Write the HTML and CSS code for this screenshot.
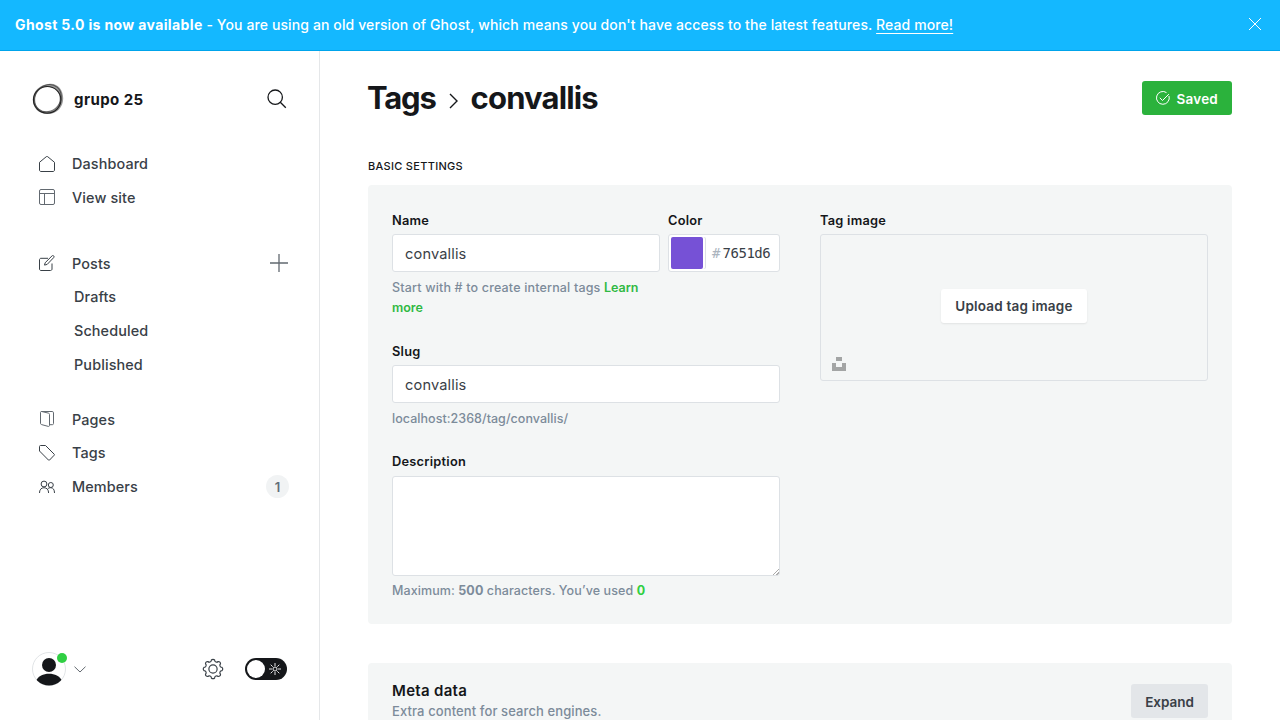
FILE: index.html
```html
<!DOCTYPE html>
<html lang="en">
<head>
<meta charset="utf-8">
<title>Tags - convallis</title>
<link rel="stylesheet" href="styles.css">
</head>
<body>
<div class="banner">
  <p class="banner-text"><b>Ghost 5.0 is now available</b> - You are using an old version of Ghost, which means you don't have access to the latest features. <a class="banner-link" href="#">Read more!</a></p>
  <svg class="banner-close" width="14" height="14" viewBox="0 0 14 14"><path d="M1 1l12 12M13 1L1 13"/></svg>
</div>
<div class="shell">
  <aside class="sidebar">
    <div class="site">
      <svg class="site-logo" width="32" height="32" viewBox="0 0 32 32" fill="none">
        <path fill="#555" fill-opacity=".6" fill-rule="evenodd" d="M18 .8C26 .4 31.200 7 31.200 15.500S25 31.200 15.500 31 .8 24.500.8 16.500 8 1.300 18 .8zM18.500 4.300C10 2.500 3 9 2.800 16.500S8.500 28.800 15.500 28.800 27.600 23 27.600 16 25 5.300 18.500 4.300z"/>
        <ellipse cx="15.200" cy="16.800" rx="13.700" ry="13.300" stroke="#222" stroke-width="1.200"/>
        <ellipse cx="16.600" cy="15.400" rx="14.300" ry="12.600" stroke="#333" stroke-opacity=".7" stroke-width="1.100" transform="rotate(-50 16 16)"/>
      </svg>
      <span class="site-name">grupo 25</span>
      <svg class="search" width="20" height="20" viewBox="0 0 20 20"><circle cx="8.2" cy="8.2" r="7.2"/><path d="M13.3 13.3L18.8 18.8"/></svg>
    </div>
    <nav class="nav">
      <ul class="nav-group">
        <li class="nav-item"><svg class="icon" viewBox="0 0 16 16"><path d="M.5 6.3V14c0 .9.6 1.5 1.500 1.500h12c.9 0 1.500-.6 1.500-1.500V6.300L8.700.7Q8 .2 7.300.7z"/></svg><span>Dashboard</span></li>
        <li class="nav-item"><svg class="icon soft" viewBox="0 0 16 16"><rect x=".5" y=".5" width="15" height="15" rx="1.5"/><path d="M.5 4.5h15M5.500 4.500v11"/></svg><span>View site</span></li>
      </ul>
      <ul class="nav-group posts">
        <li class="nav-item"><svg class="icon" viewBox="0 0 16 16"><path d="M9 3.300H2C1.100 3.300.5 3.900.5 4.800V14c0 .9.6 1.500 1.500 1.500h9.500c.9 0 1.500-.6 1.500-1.500V8.500M6.200 7.700L13 .9c.5-.5 1.200-.5 1.700 0s.5 1.200 0 1.700L8.200 9.400l-2.700.7z"/></svg><span>Posts</span><svg class="plus" width="18" height="18" viewBox="0 0 18 18"><path d="M9 0v18M0 9h18"/></svg></li>
        <li class="nav-sub">Drafts</li>
        <li class="nav-sub">Scheduled</li>
        <li class="nav-sub">Published</li>
      </ul>
      <ul class="nav-group">
        <li class="nav-item"><svg class="icon soft" viewBox="0 0 16 16"><path d="M2.300.5H13.200c.8 0 1.300.5 1.300 1.300v10.800c0 .7-.5 1.100-1.100 1.100h-2.900M2.600.5l6.800 1.600c.7.200 1.100.6 1.100 1.300v11c0 .7-.5 1.200-1.200 1L2.600 13.600c-.7-.2-1.100-.6-1.100-1.300V1.400c0-.6.5-1 1.100-.9z"/></svg><span>Pages</span></li>
        <li class="nav-item"><svg class="icon" viewBox="0 0 16 16"><path d="M.5 1.500C.5.900.9.500 1.500.500h5L15.200 9.200q.5.500 0 1l-4.700 4.900q-.5.500-1 0L.5 6z"/></svg><span>Tags</span></li>
        <li class="nav-item members"><svg class="icon" viewBox="0 0 16 16"><circle cx="5" cy="5" r="2.900"/><path d="M.5 14c0-3.300 1.700-5.300 4.500-5.300s4.600 2 4.600 5.300M8.700 9.900c.8-.9 1.900-1.200 3.100-1.200 2.300 0 3.700 1.900 3.700 5.300"/><circle cx="11.800" cy="6" r="2.500"/></svg><span>Members</span><span class="count">1</span></li>
      </ul>
    </nav>
    <footer class="side-foot">
      <div class="avatar"><svg width="34" height="34" viewBox="0 0 34 34"><defs><clipPath id="disc"><circle cx="17" cy="17" r="16.500"/></clipPath></defs><circle class="avatar-ring" cx="17" cy="17" r="16.500"/><g clip-path="url(#disc)"><circle cx="17" cy="13" r="7"/><path d="M4 29c2-4.800 7.400-7.200 13-7.200S28 24.200 30 29v5H4z"/></g></svg><i class="online"></i></div>
      <svg class="chev" width="12" height="7" viewBox="0 0 12 7"><path d="M.5.700L6 6 11.500.700"/></svg>
      <svg class="gear" width="22" height="22" viewBox="0 0 24 24"><circle cx="12" cy="12" r="4.500"/><path d="M13.730 2.180a2.300 2.300 0 0 0 3.970 1.640 2.300 2.300 0 0 1 2.480 2.480A2.300 2.300 0 0 0 21.820 10.270a2.300 2.300 0 0 1 0 3.460 2.300 2.300 0 0 0-1.640 3.970 2.300 2.300 0 0 1-2.480 2.480 2.300 2.300 0 0 0-3.970 1.640 2.300 2.300 0 0 1-3.460 0 2.300 2.300 0 0 0-3.970-1.640 2.300 2.300 0 0 1-2.480-2.480 2.300 2.300 0 0 0-1.640-3.970 2.300 2.300 0 0 1 0-3.460A2.300 2.300 0 0 0 3.820 6.300 2.300 2.300 0 0 1 6.300 3.820a2.300 2.300 0 0 0 3.970-1.640 2.300 2.300 0 0 1 3.460 0z"/></svg>
      <div class="toggle"><span class="knob"></span><svg class="sun" width="12" height="12" viewBox="0 0 12 12"><circle cx="6" cy="6" r="2"/><path d="M6 0v3M6 9v3M0 6h3M9 6h3M1.700 1.700l2 2M8.300 8.300l2 2M10.300 1.700l-2 2M3.700 8.300l-2 2"/></svg></div>
    </footer>
  </aside>
  <main class="main">
    <header class="head">
      <h1 class="title"><span>Tags</span><svg class="sep" width="9" height="16" viewBox="0 0 9 16"><path d="M1 1l7 7-7 7"/></svg><span class="crumb">convallis</span></h1>
      <button class="save"><svg width="14" height="14" viewBox="0 0 14 14"><path d="M13 5A6.400 6.400 0 1 1 10.500 1.600M3.800 6.800l2.700 2.700L12.900 3.100"/></svg><span class="save-text">Saved</span></button>
    </header>
    <h2 class="section-label">Basic settings</h2>
    <section class="card settings">
      <div class="fields">
        <div class="row">
          <div class="field name"><label class="label">Name</label><div class="input">convallis</div><p class="hint">Start with # to create internal tags <a class="green">Learn more</a></p></div>
          <div class="field color"><label class="label">Color</label><div class="input color-box"><span class="swatch"></span><span class="hash">#</span><span class="hex">7651d6</span></div></div>
        </div>
        <div class="field slug"><label class="label">Slug</label><div class="input">convallis</div><p class="hint">localhost:2368/tag/convallis/</p></div>
        <div class="field"><label class="label">Description</label><textarea class="area"></textarea><p class="hint limit">Maximum: <b>500</b> characters. You’ve used <b class="bright">0</b></p></div>
      </div>
      <div class="field image"><label class="label">Tag image</label><div class="drop"><button class="upload">Upload tag image</button><svg class="unsplash" width="14" height="14" viewBox="0 0 14 14"><path d="M4 0h6v4H4zM0 6h4v4h6V6h4v8H0z"/></svg></div></div>
    </section>
    <section class="card meta">
      <div><h3 class="meta-title">Meta data</h3><p class="meta-text">Extra content for search engines.</p></div>
      <button class="expand">Expand</button>
    </section>
  </main>
</div>
</body>
</html>
```

FILE: styles.css
```css
* { box-sizing: border-box; margin: 0; padding: 0; }
body { height: 720px; overflow: hidden; display: flex; flex-direction: column; background: #fff; color: #15171a; font-family: Inter, "Liberation Sans", sans-serif; font-size: 15px; letter-spacing: .2px; }
button { border: 0; font: inherit; letter-spacing: inherit; }
svg { fill: none; flex: none; }
ul { list-style: none; }

.banner { flex: none; height: 51px; display: flex; align-items: center; justify-content: space-between; padding: 0 18px 1px 15px; background: #14b8ff; border-bottom: 1px solid #00a4eb; color: #fff; }
.banner-text { font-size: 14px; font-weight: 500; line-height: 20px; letter-spacing: .11px; white-space: nowrap; }
.banner-text b { font-weight: 700; letter-spacing: .37px; }
.banner-link { color: #fff; letter-spacing: .1px; text-decoration: underline; text-underline-offset: 3px; }
.banner-close { stroke: #fff; stroke-width: 1; margin-bottom: 2px; }

.shell { flex: 1; min-height: 0; display: flex; }
.sidebar { width: 320px; flex: none; display: flex; flex-direction: column; border-right: 1px solid #e5e7e9; }
.site { display: flex; align-items: center; height: 32px; margin: 32px 32px 0; }
.site-name { margin-left: 10px; font-weight: 700; letter-spacing: .42px; }
.search { margin-left: auto; stroke: #15171a; stroke-width: 1.3; }
.nav { margin-top: 31.7px; color: #394047; font-size: 14.4px; font-weight: 500; letter-spacing: .12px; }
.nav-group { margin-bottom: 32.4px; }
.nav-group.posts { margin-bottom: 21.2px; }
.nav-item { display: flex; align-items: center; height: 33.7px; padding: 0 30px 0 39px; }
.nav-item .icon { width: 16px; height: 16px; margin-right: 17px; stroke: #394047; stroke-width: 1; stroke-linejoin: round; }
.nav-item .soft { stroke: #626970; }
.nav-sub { height: 33.7px; line-height: 33.7px; padding-left: 74px; }
.plus { margin-left: auto; margin-right: 1px; stroke: #626970; stroke-width: 1.3; }
.count { margin-left: auto; width: 23px; height: 23px; border-radius: 50%; background: #f1f3f4; color: #626d79; font-size: 13px; font-weight: 600; line-height: 24px; text-align: center; }
.side-foot { display: flex; align-items: center; height: 34px; margin: auto 32px 34px; }
.avatar { position: relative; width: 34px; height: 34px; }
.avatar svg { fill: #15171a; }
.avatar-ring { fill: #fff; stroke: #e1e4e6; }
.online { position: absolute; top: 1px; right: -1px; width: 10px; height: 10px; border-radius: 50%; background: #30cf43; }
.chev { margin-left: 8px; stroke: #626970; }
.gear { margin-left: auto; stroke: #394047; stroke-width: 1.3; }
.toggle { display: flex; align-items: center; justify-content: space-between; width: 42px; height: 22px; margin-left: 21px; padding: 0 6px 0 2px; border-radius: 11px; background: #15171a; }
.knob { width: 18px; height: 18px; border-radius: 50%; background: #fff; }
.sun { stroke: #fff; stroke-width: .9; }

.main { flex: 1; padding: 30px 48px 0; overflow: hidden; }
.head { display: flex; justify-content: space-between; align-items: center; height: 34px; }
.title { display: flex; align-items: center; margin-left: -1px; font-size: 31px; font-weight: 700; letter-spacing: -1.2px; line-height: 34px; }
.crumb { letter-spacing: -.85px; }
.sep { margin: 5px 13px 0; stroke: #15171a; stroke-width: 1.4; }
.save { display: flex; align-items: center; gap: 7px; height: 34px; padding: 0 14px; border-radius: 3px; background: #2bb23c; color: #fff; font-size: 13.5px; font-weight: 600; }
.save svg { stroke: #fff; }
.save-text { padding-top: 2px; }
.section-label { margin-top: 43px; font-size: 11px; font-weight: 500; line-height: 16px; letter-spacing: .3px; text-transform: uppercase; }
.card { border-radius: 4px; background: #f4f6f6; }
.settings { display: grid; grid-template-columns: 388px 388px; gap: 40px; height: 439px; margin-top: 11px; padding: 26px 24px; }
.row { display: flex; gap: 8px; height: 131px; }
.name { width: 268px; }
.color { width: 112px; }
.slug { height: 110px; }
.label { display: block; height: 23px; font-size: 12.8px; font-weight: 600; line-height: 19px; letter-spacing: .25px; }
.input { height: 38px; padding: 0 12px; border: 1px solid #dde1e5; border-radius: 3px; background: #fff; color: #394047; font-size: 14.6px; font-weight: 400; letter-spacing: .15px; line-height: 38px; }
.color-box { display: flex; padding: 2px 2px; }
.swatch { width: 32px; height: 32px; border-radius: 2px; background: #7651d6; box-shadow: 2px 0 #fff, 3px 0 #dde1e5; }
.hash { margin-left: 9px; color: #abb4be; font: 14px/32px "DejaVu Sans Mono", monospace; }
.hex { margin-left: 2px; font: 14px/32px "DejaVu Sans Mono", monospace; letter-spacing: -.5px; }
.hint { margin-top: 6px; color: #7c8b9a; font-size: 12.5px; font-weight: 500; line-height: 20px; letter-spacing: .17px; }
.slug .hint { letter-spacing: .04px; }
.hint.limit { margin-top: 5px; letter-spacing: .09px; }
.green { color: #30b943; font-weight: 600; letter-spacing: 0; }
.bright { color: #30cf43; }
.area { display: block; width: 388px; height: 100px; margin-top: 1px; border: 1px solid #dde1e5; border-radius: 3px; background: linear-gradient(135deg, transparent 52%, #aaa 52%, #aaa 62%, transparent 62%, transparent 76%, #aaa 76%, #aaa 86%, transparent 86%) right bottom / 7px 7px no-repeat #fff; resize: none; }
.drop { position: relative; display: flex; align-items: center; justify-content: center; height: 147px; border: 1px solid #dde1e5; border-radius: 3px; }
.upload { height: 34px; padding: 0 14px; margin-top: -3px; border-radius: 3px; background: #fff; color: #394047; font-size: 13.5px; font-weight: 600; box-shadow: 0 1px 2px rgba(0, 0, 0, .08); }
.unsplash { position: absolute; left: 11px; bottom: 9px; fill: #a3a5a5; }
.meta { display: flex; justify-content: space-between; height: 120px; margin-top: 39px; padding: 17px 24px; }
.meta-title { font-size: 15px; font-weight: 600; line-height: 21px; letter-spacing: .3px; }
.meta-text { color: #7c8b9a; font-size: 13px; font-weight: 500; line-height: 21px; letter-spacing: .1px; }
.expand { height: 34px; margin-top: 4px; padding: 2px 14px 0; border-radius: 3px; background: #e3e6e9; color: #394047; font-size: 13.5px; font-weight: 600; letter-spacing: 0; }
```
